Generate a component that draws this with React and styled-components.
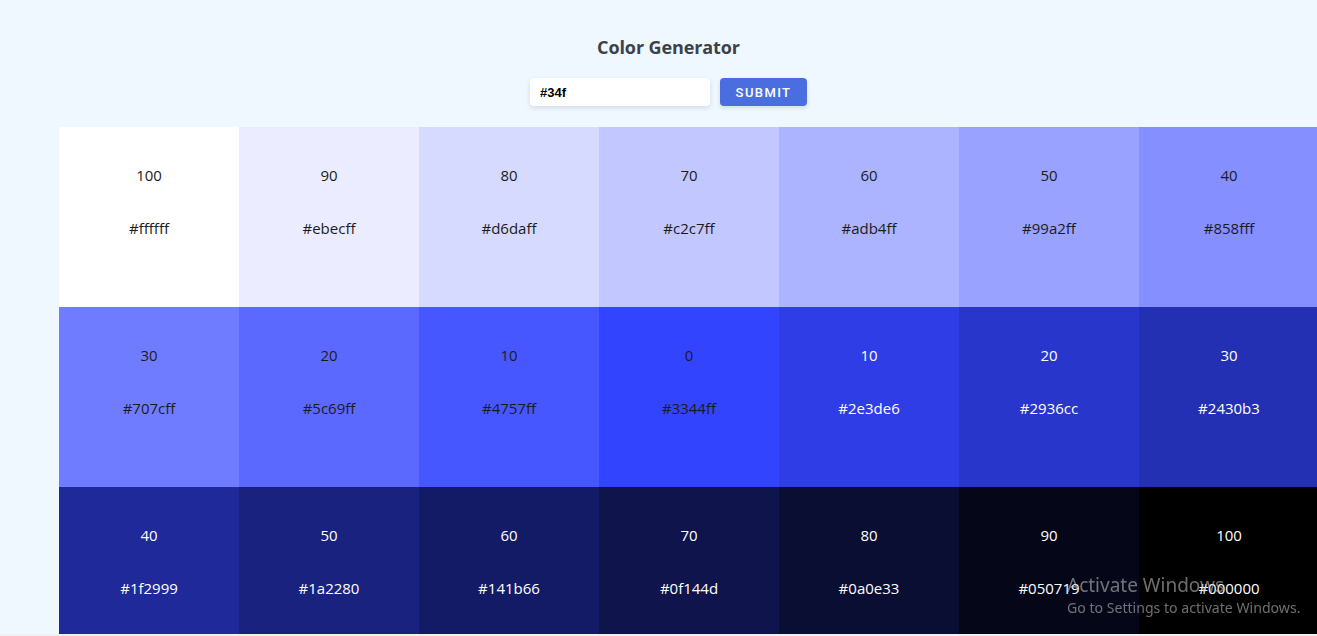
import React, { useState } from "react";
import styled, { createGlobalStyle } from "styled-components";

const GlobalStyle = createGlobalStyle`
  html, body { margin: 0; padding: 0; overflow: hidden; }
  body {
    background: #f0f8ff;
    font-family: "Open Sans", "Noto Sans", sans-serif;
    color: #222;
  }
`;

const Page = styled.main`
  min-height: 636px;
`;

const Header = styled.section`
  display: flex;
  flex-direction: column;
  align-items: center;
  padding: 36px 0 21px 20px;
`;

const Title = styled.h3`
  margin: 0;
  font-size: 18px;
  line-height: 22px;
  font-weight: 700;
  color: #3d4148;
  letter-spacing: -0.1px;
`;

const Form = styled.form`
  display: flex;
  gap: 10px;
  margin-top: 20px;
`;

const Input = styled.input`
  width: 180px;
  height: 28px;
  box-sizing: border-box;
  border: none;
  border-radius: 4px;
  background: #fff;
  box-shadow: 0 2px 5px rgba(0, 0, 0, 0.12);
  padding: 0 10px;
  font-family: "Liberation Sans", Arial, sans-serif;
  font-weight: 700;
  font-size: 13px;
  color: #000;
  outline: none;
`;

const Button = styled.button`
  width: 87px;
  height: 28px;
  border: none;
  border-radius: 4px;
  background: #4a6ee0;
  color: #fff;
  font-family: Roboto, "Liberation Sans", sans-serif;
  font-size: 13px;
  font-weight: 500;
  letter-spacing: 1.4px;
  text-transform: uppercase;
  box-shadow: 0 2px 4px rgba(0, 0, 0, 0.12);
  cursor: pointer;
`;

const Grid = styled.section`
  display: grid;
  grid-template-columns: repeat(7, 180px);
  grid-auto-rows: 180px;
  margin-left: 59px;
`;

const Cell = styled.article`
  display: flex;
  flex-direction: column;
  align-items: center;
  padding-top: 37px;
  box-sizing: border-box;
  background: ${(p) => p.$bg};
  color: ${(p) => (p.$light ? "#ffffff" : "#1c1c1c")};
  font-size: 15px;
  line-height: 22px;
`;

const Weight = styled.p`
  margin: 0;
`;

const Hex = styled.p`
  margin: 31px 0 0;
`;

const Watermark = styled.div`
  position: fixed;
  left: 1067px;
  top: 572px;
  color: rgba(200, 200, 200, 0.55);
  font-family: "Noto Sans", "Open Sans", sans-serif;
  pointer-events: none;
`;

const WmTitle = styled.div`
  font-size: 19px;
  line-height: 26px;
`;

const WmSub = styled.div`
  font-size: 14.1px;
  line-height: 18px;
  margin-top: 1px;
`;

const BottomStrip = styled.div`
  position: fixed;
  left: 0;
  right: 0;
  bottom: 0;
  height: 2px;
  background: #f0f0f0;
`;

const colors = [
  ["100", "#ffffff", false],
  ["90", "#ebecff", false],
  ["80", "#d6daff", false],
  ["70", "#c2c7ff", false],
  ["60", "#adb4ff", false],
  ["50", "#99a2ff", false],
  ["40", "#858fff", false],
  ["30", "#707cff", false],
  ["20", "#5c69ff", false],
  ["10", "#4757ff", false],
  ["0", "#3344ff", false],
  ["10", "#2e3de6", true],
  ["20", "#2936cc", true],
  ["30", "#2430b3", true],
  ["40", "#1f2999", true],
  ["50", "#1a2280", true],
  ["60", "#141b66", true],
  ["70", "#0f144d", true],
  ["80", "#0a0e33", true],
  ["90", "#050719", true],
  ["100", "#000000", true],
];

export default function App() {
  const [value, setValue] = useState("#34f");
  return (
    <Page>
      <GlobalStyle />
      <Header>
        <Title>Color Generator</Title>
        <Form onSubmit={(e) => e.preventDefault()}>
          <Input value={value} onChange={(e) => setValue(e.target.value)} />
          <Button type="submit">Submit</Button>
        </Form>
      </Header>
      <Grid>
        {colors.map(([w, hex, light], i) => (
          <Cell key={i} $bg={hex} $light={light}>
            <Weight>{w}</Weight>
            <Hex>{hex}</Hex>
          </Cell>
        ))}
      </Grid>
      <Watermark>
        <WmTitle>Activate Windows</WmTitle>
        <WmSub>Go to Settings to activate Windows.</WmSub>
      </Watermark>
      <BottomStrip />
    </Page>
  );
}
